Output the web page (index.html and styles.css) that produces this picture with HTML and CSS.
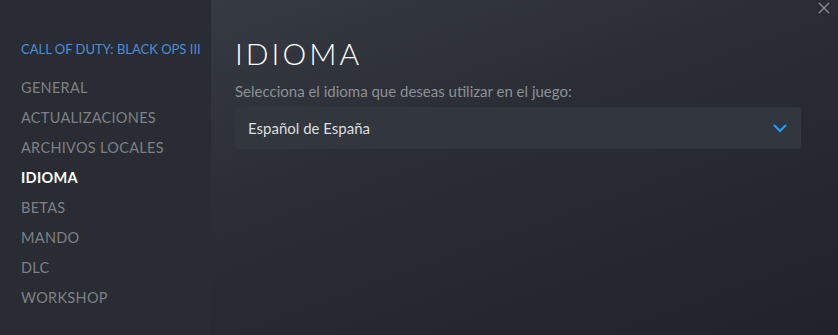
FILE: index.html
```html
<!DOCTYPE html>
<html lang="es">
<head>
    <meta charset="UTF-8">
    <title>Propiedades - Idioma</title>
    <link rel="stylesheet" href="styles.css">
</head>
<body>
    <div class="window">
        <nav class="sidebar">
            <div class="game-title">CALL OF DUTY: BLACK OPS III</div>
            <ul class="menu">
                <li>GENERAL</li>
                <li>ACTUALIZACIONES</li>
                <li>ARCHIVOS LOCALES</li>
                <li class="active">IDIOMA</li>
                <li>BETAS</li>
                <li>MANDO</li>
                <li>DLC</li>
                <li>WORKSHOP</li>
            </ul>
        </nav>
        <main class="content">
            <button class="close-btn" aria-label="Cerrar">
                <svg width="12" height="12" viewBox="0 0 12 12">
                    <path d="M1 1 L11 11 M11 1 L1 11" stroke="#8a8f96" stroke-width="1.3" fill="none"/>
                </svg>
            </button>
            <h1>IDIOMA</h1>
            <p class="label">Selecciona el idioma que deseas utilizar en el juego:</p>
            <div class="dropdown">
                <span>Español de España</span>
                <svg width="16" height="10" viewBox="0 0 16 10">
                    <path d="M2 2 L8 8 L14 2" stroke="#1a9fff" stroke-width="2.2" fill="none"/>
                </svg>
            </div>
        </main>
    </div>
</body>
</html>
```

FILE: styles.css
```css
html, body {
    margin: 0;
    padding: 0;
    height: 100%;
}
body {
    font-family: Lato, "Open Sans", sans-serif;
    background-color: #24272e;
    overflow: hidden;
}
.window {
    display: flex;
    height: 335px;
}
.sidebar {
    width: 211px;
    flex-shrink: 0;
    background-color: #292c33;
    padding: 41px 0 0 21px;
    box-sizing: border-box;
}
.game-title {
    color: #4a8fdc;
    font-size: 13px;
    line-height: 16px;
    margin-bottom: 16px;
}
.menu {
    list-style: none;
    margin: 0;
    padding: 0;
}
.menu li {
    color: #7d8086;
    font-size: 14.5px;
    line-height: 30px;
    letter-spacing: 0.3px;
}
.menu li.active {
    color: #ffffff;
    font-weight: bold;
}
.content {
    flex: 1;
    position: relative;
    padding: 35px 37px 0 24px;
    background: linear-gradient(160deg, #363a42 0%, #2a2d35 40%, #202329 100%);
}
.close-btn {
    position: absolute;
    top: 2px;
    right: 8px;
    background: none;
    border: none;
    padding: 0;
    cursor: pointer;
}
h1 {
    margin: 0;
    color: #ffffff;
    font-weight: 300;
    font-size: 30px;
    letter-spacing: 3px;
    line-height: 36px;
}
.label {
    margin: 11px 0 7px 0;
    color: #8b9096;
    font-size: 15px;
    line-height: 18px;
}
.dropdown {
    display: flex;
    align-items: center;
    justify-content: space-between;
    height: 42px;
    padding: 0 13px 0 13px;
    background-color: #32363e;
    border-radius: 3px;
    color: #dcdedf;
    font-size: 15px;
}
```
